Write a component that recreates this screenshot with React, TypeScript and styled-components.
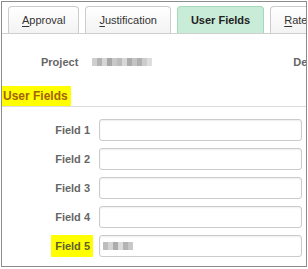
import React from "react";
import styled, { createGlobalStyle } from "styled-components";

const GlobalStyle = createGlobalStyle`
  body {
    margin: 0;
    background: #ffffff;
    font-family: "Liberation Sans", Arial, sans-serif;
  }
`;

type TabInfo = { label: string; key?: number; active?: boolean };

const tabs: TabInfo[] = [
  { label: "Approval", key: 0 },
  { label: "Justification", key: 0 },
  { label: "User Fields", active: true },
  { label: "Rate", key: 0 },
];

const fields = ["Field 1", "Field 2", "Field 3", "Field 4", "Field 5"];

// grey shades for the blurred-out values
const projectBlocks = ["#cfcfcf", "#b4b4b4", "#d6d6d6", "#a8a8a8", "#c8c8c8", "#bcbcbc", "#d8d8d8", "#acacac", "#c4c4c4", "#b0b0b0", "#cccccc", "#dedede"];
const field5Blocks = ["#bdbdbd", "#d4d4d4", "#acacac", "#dcdcdc", "#b4b4b4", "#c8c8c8"];

const App = () => {
  return (
    <>
      <GlobalStyle />
      <Frame>
        <TabBar>
          {tabs.map((t) => (
            <Tab key={t.label} active={t.active}>
              {t.key !== undefined ? (
                <>
                  <u>{t.label.slice(0, 1)}</u>
                  {t.label.slice(1)}
                </>
              ) : (
                t.label
              )}
            </Tab>
          ))}
        </TabBar>

        <ProjectRow>
          <InfoLabel>Project</InfoLabel>
          <ValueCell>
            <Mosaic>
              {projectBlocks.map((c, i) => (
                <Block key={i} style={{ background: c }} />
              ))}
            </Mosaic>
          </ValueCell>
          <InfoLabel>Description</InfoLabel>
        </ProjectRow>

        <SectionHead>
          <HeadText>User Fields</HeadText>
        </SectionHead>

        <FieldGrid>
          {fields.map((f, i) => {
            const last = i === fields.length - 1;
            return (
              <React.Fragment key={f}>
                <LabelCell>
                  <FieldLabel highlight={last}>{f}</FieldLabel>
                </LabelCell>
                <FieldInput>
                  {last && (
                    <Mosaic>
                      {field5Blocks.map((c, j) => (
                        <Block key={j} style={{ background: c }} />
                      ))}
                    </Mosaic>
                  )}
                </FieldInput>
              </React.Fragment>
            );
          })}
        </FieldGrid>
      </Frame>
    </>
  );
};

const Frame = styled.div`
  margin: 1px;
  width: 306px;
  height: 266px;
  box-sizing: border-box;
  border: 1px solid #8c8c8c;
  overflow: hidden;
`;

const TabBar = styled.div`
  display: flex;
  gap: 6px;
  padding: 4px 0 0 6px;
  border-bottom: 1px solid #cfcfcf;
  white-space: nowrap;
`;

const Tab = styled.div<{ active?: boolean }>`
  flex-shrink: 0;
  height: 27px;
  box-sizing: border-box;
  padding: 0 13px;
  display: flex;
  align-items: center;
  font-size: 11px;
  font-weight: ${(p) => (p.active ? 700 : 400)};
  color: ${(p) => (p.active ? "#222" : "#333")};
  border: 1px solid ${(p) => (p.active ? "#a6d8bb" : "#cccccc")};
  border-bottom: none;
  border-radius: 4px 4px 0 0;
  background: ${(p) =>
    p.active ? "#c8ecd7" : "linear-gradient(#ffffff, #f3f3f3)"};

  u {
    text-decoration-thickness: 1px;
    text-underline-offset: 2px;
  }
`;

const ProjectRow = styled.div`
  display: flex;
  align-items: center;
  margin-top: 21px;
  padding-left: 39px;
  height: 14px;
  white-space: nowrap;
`;

const InfoLabel = styled.span`
  flex-shrink: 0;
  font-size: 11px;
  font-weight: 700;
  color: #666;
  line-height: 14px;
`;

const ValueCell = styled.div`
  flex-shrink: 0;
  width: 215px;
  padding-left: 14px;
  box-sizing: border-box;
`;

const Mosaic = styled.div`
  display: flex;
  height: 8px;
  filter: blur(0.5px);
`;

const Block = styled.span`
  width: 5px;
  height: 8px;
  flex-shrink: 0;
`;

const SectionHead = styled.div`
  margin-top: 17px;
  border-bottom: 1px solid #dddddd;
  height: 20px;
`;

const HeadText = styled.span`
  display: inline-block;
  height: 20px;
  line-height: 21px;
  padding: 0 3px 0 1px;
  background: #ffff00;
  color: #a3620a;
  font-size: 12px;
  font-weight: 700;
`;

const FieldGrid = styled.div`
  display: grid;
  grid-template-columns: 91px 203px;
  column-gap: 6px;
  row-gap: 7px;
  margin-top: 12px;
`;

const LabelCell = styled.div`
  display: flex;
  justify-content: flex-end;
`;

const FieldLabel = styled.span<{ highlight?: boolean }>`
  height: 22px;
  line-height: 22px;
  padding: 0 3px 0 4px;
  font-size: 11px;
  font-weight: 700;
  color: ${(p) => (p.highlight ? "#5f5f2a" : "#666")};
  background: ${(p) => (p.highlight ? "#ffff00" : "transparent")};
`;

const FieldInput = styled.div`
  height: 22px;
  box-sizing: border-box;
  border: 1px solid #cbcbcb;
  border-radius: 3px;
  box-shadow: inset 0 1px 2px rgba(0, 0, 0, 0.07);
  background: #fff;
  display: flex;
  align-items: center;
  padding-left: 3px;
`;

export default App;
